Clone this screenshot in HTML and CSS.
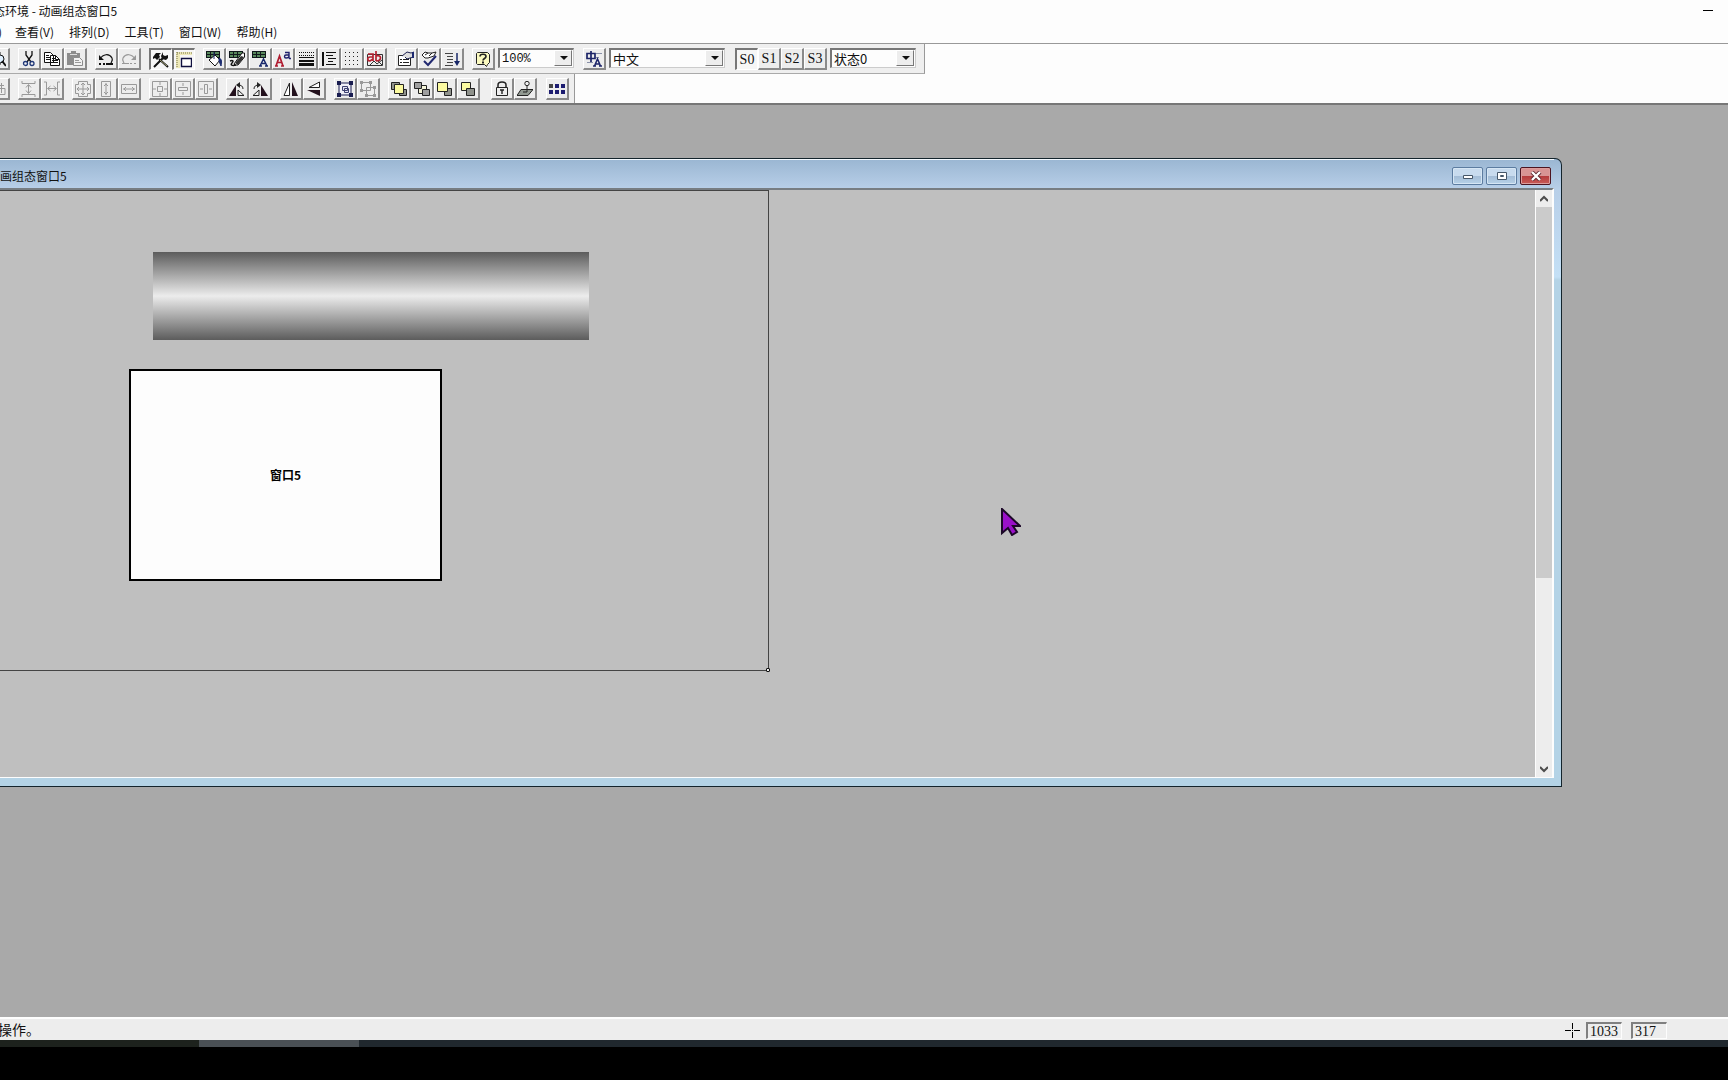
FILE: index.html
```html
<!DOCTYPE html>
<html lang="zh-CN">
<head>
<meta charset="utf-8">
<title>动画组态窗口5</title>
<link rel="stylesheet" href="styles.css">
</head>
<body>
<svg class="defs" aria-hidden="true">
  <symbol id="undo" viewBox="0 0 16 16"><path d="M2 8c3-5 9-6 12-1 1 2 0 3-1 5" fill="none" stroke="currentColor" stroke-width="1.2"/><path d="M1 4v5h5zM1 12h2v2H1zM5 12h2v2H5zM8 12h7v2H8z" fill="currentColor"/></symbol>
  <symbol id="redo" viewBox="0 0 16 16"><path d="M14 8C11 3 5 2 2 7c-1 2 0 3 1 5" fill="none" stroke="currentColor" stroke-width="1.2"/><path d="M15 4v5h-5zM1 12h7v1H1zM9 12h2v1H9zM13 12h2v1h-2z" fill="currentColor"/></symbol>
  <symbol id="table" viewBox="0 0 16 16"><path d="M0 0h14v7H0z" fill="#10181c"/><path d="M1 1h3v2H1zM5 1h3v2H5zM9 1h4v2H9zM1 4h3v2H1zM5 4h3v2H5zM9 4h4v2H9z" fill="#58885c"/></symbol>
  <symbol id="rotate" viewBox="0 0 16 16"><path d="M7 4v11H0z" fill="#22101c"/><path d="M9 14.500V9l6 5.500zM14 8c0-3-2-4-5-4" fill="none" stroke="#222"/><path d="M11 1v6L7 4z" fill="#222"/></symbol>
  <symbol id="mirror" viewBox="0 0 16 16"><path d="M6.500 2v12.500H1z" fill="#fff" stroke="#222"/><path d="M9 1l6 14H9z" fill="#22101c"/></symbol>
  <symbol id="frame" viewBox="0 0 16 16"><path d="M.5.5h15v15H.5z" fill="none" stroke="currentColor"/></symbol>
</svg>
<div class="app">
  <header class="titlebar">
    <h1 class="caption">态环境 - 动画组态窗口5</h1>
    <button class="minimize" aria-label="最小化"><svg viewBox="0 0 10 10"><path d="M0 4h10v1H0z"/></svg></button>
  </header>
  <nav class="menu">
    <button class="cut">)</button><button>查看(V)</button><button>排列(D)</button><button>工具(T)</button><button>窗口(W)</button><button>帮助(H)</button>
  </nav>
  <div class="toolbars">
    <div class="toolbar">
      <div class="group first">
        <button class="tool" aria-label="预览"><svg viewBox="0 0 16 16"><path d="M3 1h7v13H1z" fill="#fff" stroke="#222"/><circle cx="10" cy="8" r="4" fill="#dff0ff" stroke="#111"/><path d="M12 10l4 5" stroke="#111" stroke-width="2"/></svg></button>
      </div>
      <div class="group">
        <button class="tool" aria-label="剪切"><svg viewBox="0 0 16 16"><path d="M5 0v4l5 7M11 0v4l-5 7" fill="none" stroke="#111" stroke-width="1.300"/><circle cx="4.500" cy="12.500" r="2" fill="none" stroke="#203878" stroke-width="1.300"/><circle cx="11" cy="12.500" r="2" fill="none" stroke="#203878" stroke-width="1.300"/></svg></button>
        <button class="tool" aria-label="复制"><svg viewBox="0 0 16 16"><path d="M.5 1.500h6l3 3v7h-9zM6.500 4.500h5l4 4v6h-9z" fill="#fff" stroke="#111"/><path d="M2 4.500h3M2 6.500h4M2 8.500h4M8 7.500h3M8 9.500h6M8 11.500h6M11.500 4.500v4h4" fill="none" stroke="#111"/></svg></button>
        <button class="tool" aria-label="粘贴"><svg viewBox="0 0 16 16"><path d="M0 2h4V0h5v2h4v12H0z" fill="#8c8c8c"/><path d="M3 3.500h7" stroke="#ddd"/><path d="M6.500 6.500h6l3 3v5h-9z" fill="#f2f2f2" stroke="#8c8c8c"/><path d="M8 9.500h4M8 11.500h6" stroke="#999"/></svg></button>
      </div>
      <div class="group">
        <button class="tool" aria-label="撤消"><svg><use href="#undo"/></svg></button>
        <button class="tool dim" aria-label="重做"><svg><use href="#redo"/></svg></button>
      </div>
      <div class="group">
        <button class="tool on" aria-label="工具箱"><svg viewBox="0 0 16 16"><path d="M1 15L10 6M6 7l9 8" stroke="#111" stroke-width="2"/><path d="M0 5l3-4h5L6 3l1 2-3 3-2-2-2 1z" fill="#111"/><path d="M10 0v3l2 1 3-1v3l-2 2-4-1-1-3z" fill="#111"/><path d="M7 8l7 6" stroke="#a4a478"/></svg></button>
        <button class="tool on" aria-label="标尺"><svg viewBox="0 0 16 16"><path d="M0 0h16v3H4v13H0z" fill="#eee9b8"/><path d="M1 0v16M1 1h15" fill="none" stroke="#77734a" stroke-dasharray="1 1"/><path d="M5.500 6.500h10v8h-10z" fill="#fff" stroke="#101040" stroke-width="1.400"/></svg></button>
      </div>
      <div class="group">
        <button class="tool" aria-label="填充色"><svg viewBox="0 0 16 16"><use href="#table" width="16" height="16"/><path d="M9 4l5 5-5 6-6-6z" fill="#fff" stroke="#111"/><path d="M8 1v7M13 7c3 1 3 4 2 8l-2-5z" fill="#1c2c70" stroke="#1c2c70"/></svg></button>
        <button class="tool" aria-label="线色"><svg viewBox="0 0 16 16"><use href="#table" width="16" height="16"/><path d="M15.500 2v4L9 14H6l-1-1 8-11z" fill="#fff" stroke="#111"/><path d="M9 14l6-8-3-1-6 7z" fill="#333"/><path d="M1 10c3-1 4 0 2 2s0 3 4 2" fill="none" stroke="#111" stroke-width="1.500"/></svg></button>
        <button class="tool" aria-label="字符色"><svg viewBox="0 0 16 16"><use href="#table" width="16" height="16"/><path d="M8 15l3.500-7L15 15M9 12.500h5M7 15h3M13 15h3" fill="none" stroke="#18286c" stroke-width="1.500"/></svg></button>
        <button class="tool" aria-label="字体"><svg viewBox="0 0 16 16"><path d="M1 15L4.500 5 8 15M2 11.500h5M0 15h3M6 15h3" fill="none" stroke="#b01c30" stroke-width="1.700"/><path d="M10 1.500h4v6M14 4h-3c-2 0-2 3 0 3s3-1 3-2M14 7.500h2" fill="none" stroke="#20206c" stroke-width="1.400"/></svg></button>
        <button class="tool" aria-label="线型"><svg viewBox="0 0 16 16"><path d="M1 1.500h15M1 4.500h15" stroke="#111" stroke-dasharray="1 1"/><path d="M1 6.500h15" stroke="#111"/><path d="M1 10h15" stroke="#111" stroke-width="2"/><path d="M1 13.500h15" stroke="#111" stroke-width="3"/></svg></button>
        <button class="tool" aria-label="对齐"><svg viewBox="0 0 16 16"><path d="M2 1v14" stroke="#111" stroke-width="2"/><path d="M5 1.500h10M5 4.500h7M7 7.500h8M7 10.500h5M5 13.500h10" stroke="#111"/></svg></button>
        <button class="tool" aria-label="网格"><svg viewBox="0 0 16 16"><path d="M1 1.500h15M1 5.500h15M1 9.500h15M1 13.500h15" stroke="#222" stroke-dasharray="1 3"/></svg></button>
        <button class="tool" aria-label="标签"><svg viewBox="0 0 16 16"><path d="M.5 3.500h15v11H.5z" fill="#eee" stroke="#333"/><path d="M3 14l4-4 3 3 5-4M11 10l4 4" fill="none" stroke="#333"/><path d="M1 3h5v7M6 6H3c-3 0-3 4 0 4l3-2M9 0v10M9 5c6-2 6 5 0 5" fill="none" stroke="#b42030" stroke-width="1.700"/></svg></button>
      </div>
      <div class="group">
        <button class="tool" aria-label="属性"><svg viewBox="0 0 16 16"><path d="M.5 4.500h12v10H.5z" fill="#fff" stroke="#222"/><path d="M2 8.500h2M5 8.500h6M2 11.500h2M5 11.500h6" stroke="#222"/><path d="M4 5l5-4 4 1 3-1v5l-4 1-3 1-2-2" fill="#ddd" stroke="#1c2050"/><path d="M14 1h2v6h-2z" fill="#1c2870"/></svg></button>
        <button class="tool" aria-label="检查"><svg viewBox="0 0 16 16"><path d="M3 10l4 4 8-9" fill="none" stroke="#202870" stroke-width="2"/><path d="M1 4l3-3 3 1 4 0 4-1-2 4-6 2-3 0zM4 4l3-2M8 5l3-3" fill="#fff" stroke="#222"/></svg></button>
        <button class="tool" aria-label="排序"><svg viewBox="0 0 16 16"><path d="M1 2.500h8M3 5.500h6M3 8.500h6M3 11.500h6M1 14.500h8" stroke="#444"/><path d="M13 2v10" stroke="#182868" stroke-width="1.500"/><path d="M10 10h6l-3 5z" fill="#182868"/></svg></button>
      </div>
      <div class="group">
        <button class="tool" aria-label="帮助"><svg viewBox="0 0 16 16"><path d="M2.500 1.500h10l2 2v8l-2 2-1 2-2-2h-7l-1-1v-10z" fill="#fbfac0" stroke="#222"/><path d="M5 5.500c0-3 6-3 6 0 0 2-3 2-3 4" fill="none" stroke="#222" stroke-width="1.600"/><path d="M7 10.500h2v2H7z" fill="#222"/></svg></button>
        <span class="combo zoom"><select aria-label="缩放"><option>100%</option></select></span>
      </div>
      <div class="group lang">
        <button class="tool" aria-label="语言"><svg viewBox="0 0 16 16"><path d="M1 2.500h8v5H1zM5 0v11" fill="none" stroke="#1c2468" stroke-width="1.700"/><path d="M10 2.500h6M10 6.500h3M1 11.500h6" stroke="#8890a8"/><path d="M8.500 15l3-7 3 7M10 13h4M7 15h3M13 15h3" fill="none" stroke="#1c2468" stroke-width="1.500"/></svg></button>
        <span class="combo language"><select aria-label="语言选择"><option>中文</option></select></span>
      </div>
      <div class="group states">
        <button class="tool on">S0</button><button class="tool">S1</button><button class="tool">S2</button><button class="tool">S3</button>
        <span class="combo state"><select aria-label="状态"><option>状态0</option></select></span>
      </div>
    </div>
    <div class="toolbar">
      <div class="group first">
        <button class="tool dim" aria-label="下对齐"><svg viewBox="0 0 16 16"><path d="M2 4.500h12M11.500 2v10M8 7.500h7v6H4v-4" fill="none" stroke="currentColor"/></svg></button>
      </div>
      <div class="group dim">
        <button class="tool" aria-label="纵向等间距"><svg viewBox="0 0 16 16"><path d="M1 0v2.500h13V0M1 16v-2.500h13V16M7.500 4v8M5 6.500l2.500-3 2.500 3M5 9.500l2.500 3 2.500-3" fill="none" stroke="currentColor"/></svg></button>
        <button class="tool" aria-label="横向等间距"><svg viewBox="0 0 16 16"><path d="M0 1h2.500v13H0M16 1h-2.500v13H16M4 7.500h8M6.500 5l-3 2.500 3 2.500M9.500 5l3 2.500-3 2.500" fill="none" stroke="currentColor"/></svg></button>
      </div>
      <div class="group dim">
        <button class="tool" aria-label="等高宽"><svg viewBox="0 0 16 16"><path d="M3.500 3.500V.5h9v3h3v9h-3v3h-9v-3h-3v-9zM8 2v12M2 8h12M6 4l2-2 2 2M6 12l2 2 2-2M4 6L2 8l2 2M12 6l2 2-2 2" fill="none" stroke="currentColor"/></svg></button>
        <button class="tool" aria-label="等高"><svg viewBox="0 0 16 16"><path d="M3.500.5h9v15h-9zM8 2v12M6 5l2-2 2 2M6 11l2 2 2-2" fill="none" stroke="currentColor"/></svg></button>
        <button class="tool" aria-label="等宽"><svg viewBox="0 0 16 16"><path d="M.5 3.500h15v9H.5zM2 8h12M5 6L3 8l2 2M11 6l2 2-2 2" fill="none" stroke="currentColor"/></svg></button>
      </div>
      <div class="group dim">
        <button class="tool" aria-label="窗口对中"><svg viewBox="0 0 16 16"><use href="#frame"/><path d="M5.500 5.500h5v5h-5zM8 1v3M8 12v3M1 8h3M12 8h3" fill="none" stroke="currentColor"/></svg></button>
        <button class="tool" aria-label="纵向对中"><svg viewBox="0 0 16 16"><use href="#frame"/><path d="M3.500 6.500h9v3h-9zM8 2v3M8 11v3" fill="none" stroke="currentColor"/></svg></button>
        <button class="tool" aria-label="横向对中"><svg viewBox="0 0 16 16"><use href="#frame"/><path d="M6.500 3.500h3v9h-3zM2 8h3M11 8h3" fill="none" stroke="currentColor"/></svg></button>
      </div>
      <div class="group">
        <button class="tool" aria-label="左旋"><svg><use href="#rotate"/></svg></button>
        <button class="tool flip" aria-label="右旋"><svg><use href="#rotate"/></svg></button>
      </div>
      <div class="group">
        <button class="tool" aria-label="左右镜像"><svg><use href="#mirror"/></svg></button>
        <button class="tool" aria-label="上下镜像"><svg viewBox="0 0 16 16"><path d="M13.500 1v5.500H3z" fill="#fff" stroke="#222"/><path d="M1 9h13v6z" fill="#22101c"/></svg></button>
      </div>
      <div class="group">
        <button class="tool" aria-label="组合"><svg viewBox="0 0 16 16"><path d="M2 2h12v12H2z" fill="#f0f0f8" stroke="#181c50"/><path d="M5.500 5.500h5v4h-5zM7.500 7.500h4v4h-4z" fill="#e4e4f4" stroke="#3c4070"/><path d="M0 0h4v4H0zM12 0h4v4h-4zM0 12h4v4H0zM12 12h4v4h-4z" fill="#181c50"/></svg></button>
        <button class="tool dim" aria-label="分解"><svg viewBox="0 0 16 16"><path d="M1.500 1.500h9v8h-9zM6.500 6.500h8v8h-8z" fill="#eee" stroke="currentColor"/><path d="M0 0h3v3H0zM9 0h3v3H9zM0 8h3v3H0zM13 5h3v3h-3zM5 13h3v3H5zM13 13h3v3h-3z" fill="currentColor"/></svg></button>
      </div>
      <div class="group">
        <button class="tool" aria-label="置于最前"><svg viewBox="0 0 16 16"><path d="M.5 1.500h8v7h-8zM8.500 8.500h7v6h-7z" fill="#8f928c" stroke="#222"/><path d="M3.500 3.500h9v9h-9z" fill="#fbfaa0" stroke="#222"/></svg></button>
        <button class="tool" aria-label="置于最后"><svg viewBox="0 0 16 16"><path d="M4.500 4.500h8v8h-8z" fill="#f4f4d8" stroke="#222"/><path d="M.5 1.500h7v6h-7zM8.500 8.500h7v6h-7z" fill="#9f9f9f" stroke="#222"/></svg></button>
        <button class="tool" aria-label="前移一层"><svg viewBox="0 0 16 16"><path d="M7.500 7.500h7v7h-7z" fill="#8f928c" stroke="#222"/><path d="M.5 1.500h10v9H.5z" fill="#fbfaa0" stroke="#222"/></svg></button>
        <button class="tool" aria-label="后移一层"><svg viewBox="0 0 16 16"><path d="M1.500 1.500h9v8h-9z" fill="#fbfaa0" stroke="#222"/><path d="M6.500 7.500h8v7h-8z" fill="#8f928c" stroke="#222"/></svg></button>
      </div>
      <div class="group locks">
        <button class="tool" aria-label="锁定"><svg viewBox="0 0 16 16"><path d="M4 7V4c0-4 8-4 8 0v3" fill="none" stroke="#222" stroke-width="1.500"/><path d="M2.500 6.500h11v8h-11z" fill="#eee" stroke="#222"/><path d="M6 9h4M8 9v4" stroke="#222" stroke-width="1.400"/></svg></button>
        <button class="tool" aria-label="固化"><svg viewBox="0 0 16 16"><path d="M4 8.500h12l-5 6H0z" fill="#929a92" stroke="#222"/><circle cx="10" cy="2.500" r="2.200" fill="#eee" stroke="#222"/><path d="M10 5v6M6 11h4" stroke="#222"/></svg></button>
      </div>
      <div class="group">
        <button class="tool" aria-label="多重复制"><svg viewBox="0 0 16 16"><path d="M0 3h4v4H0z" fill="#444"/><path d="M6 3h4v4H6zM12 3h4v4h-4zM0 9h4v4H0zM6 9h4v4H6zM12 9h4v4h-4z" fill="#1c1c70"/></svg></button>
      </div>
    </div>
  </div>
  <main class="desktop">
    <section class="window">
      <header class="window-title">
        <h2>画组态窗口5</h2>
        <div class="window-buttons">
          <button aria-label="最小化"><svg viewBox="0 0 12 10"><path d="M1.500 4.500h9v3h-9z" fill="#fff" stroke="#455668"/></svg></button>
          <button aria-label="最大化"><svg viewBox="0 0 12 10"><path d="M1.500 1.500h9v7h-9z" fill="#fff" stroke="#455668"/><path d="M4.500 4.500h3v1h-3z" fill="none" stroke="#455668"/></svg></button>
          <button class="close" aria-label="关闭"><svg viewBox="0 0 12 10"><path d="M2 1l8 8M10 1L2 9" stroke="#5c2830" stroke-width="4"/><path d="M2 1l8 8M10 1L2 9" stroke="#fff" stroke-width="2.400"/></svg></button>
        </div>
      </header>
      <div class="client">
        <div class="canvas">
          <div class="page">
            <div class="pipe"></div>
            <div class="label">窗口5</div>
            <span class="handle"></span>
          </div>
        </div>
        <div class="scroll">
          <button aria-label="向上滚动"><svg viewBox="0 0 8 8"><path d="M0 6l4-4 4 4" fill="none" stroke="#4c4c4c" stroke-width="2"/></svg></button>
          <div class="track"><div class="thumb"></div></div>
          <button aria-label="向下滚动"><svg viewBox="0 0 8 8"><path d="M0 2l4 4 4-4" fill="none" stroke="#4c4c4c" stroke-width="2"/></svg></button>
        </div>
      </div>
    </section>
    <svg class="pointer" viewBox="0 0 20 28"><path d="M1 1v24l6-5 4 7 5-3-4-6h7z" fill="#9a10c8" stroke="#1c0828" stroke-width="2"/></svg>
  </main>
  <footer class="status">
    <span class="message">操作。</span>
    <svg class="cross" viewBox="0 0 15 15"><path d="M0 7h6v1H0zM9 7h6v1H9zM7 0h1v6H7zM7 9h1v6H7zM7 7h1v1H7z"/></svg>
    <output>1033</output><output>317</output>
  </footer>
  <div class="taskbar"><span class="task"></span><span class="tray"></span></div>
</div>
</body>
</html>
```
FILE: styles.css
```css
* { box-sizing: border-box; }
body {
  margin: 0;
  background: #000;
  color: #111;
  font: 12px/16px "Noto Sans CJK SC", sans-serif;
}
h1, h2 { margin: 0; font-size: 12px; font-weight: 400; }
button { margin: 0; padding: 0; border: 0; background: none; color: inherit; font: inherit; }
svg { display: block; }
.defs { position: absolute; width: 0; height: 0; }
.app {
  display: flex;
  flex-direction: column;
  height: 100vh;
  padding-bottom: 33px;
  overflow: hidden;
}

/* Title and menu */
.titlebar {
  display: flex;
  justify-content: space-between;
  align-items: center;
  height: 22px;
  padding-right: 14px;
  background: #fdfdfd;
}
.caption { margin-left: -7px; white-space: pre; }
.minimize svg { width: 12px; height: 10px; }
.menu {
  display: flex;
  gap: 15px;
  height: 22px;
  padding-bottom: 1px;
  background: #fdfdfd;
  border-bottom: 1px solid #999;
}
.menu .cut { margin: 0 -2px 0 -2px; }

/* Toolbars */
.toolbars { background: #fdfdfd; border-bottom: 2px solid #777; }
.toolbar {
  display: flex;
  gap: 8px;
  width: fit-content;
  height: 30px;
  padding: 4px 8px 3px 0;
  background: #efefef;
  border-right: 1px solid #999;
  border-bottom: 1px solid #aaa;
}
.toolbar + .toolbar { height: 29px; padding-right: 5px; border-bottom: 0; }
.group { display: flex; }
.group.first { margin-left: -13px; }
.lang { margin-left: 1px; }
.states { margin-left: 2px; font: 14px/18px "Liberation Serif", serif; }
.locks { margin: 0 1px 0 3px; }
.tool {
  display: flex;
  align-items: center;
  justify-content: center;
  width: 23px;
  height: 22px;
  background: #ededed;
  border: solid;
  border-width: 1px 2px 2px 1px;
  border-color: #fff #8a8a8a #8a8a8a #fff;
}
.tool.on {
  background: #f6f6f6;
  border-width: 2px 1px 1px 2px;
  border-color: #777 #fff #fff #777;
}
.tool svg { width: 16px; height: 16px; }
.dim { color: #999; }
.flip svg { transform: scaleX(-1); }
.combo { position: relative; height: 20px; margin-left: 3px; }
.combo::before {
  content: "";
  position: absolute;
  top: 2px;
  right: 2px;
  bottom: 2px;
  width: 16px;
  background: #ededed;
  border: 1px solid;
  border-color: #fff #777 #777 #fff;
  pointer-events: none;
}
.combo::after {
  content: "";
  position: absolute;
  top: 8px;
  right: 6px;
  border: solid transparent;
  border-width: 4px 4px 0;
  border-top-color: #111;
  pointer-events: none;
}
.combo select {
  appearance: none;
  display: block;
  width: 100%;
  height: 20px;
  padding: 0 2px;
  background: #fdfdfd;
  border: solid;
  border-width: 2px 1px 1px 2px;
  border-color: #777 #ccc #ccc #777;
  border-radius: 0;
  color: #111;
  font: 13px/16px "Noto Sans CJK SC", sans-serif;
}
.zoom { width: 76px; }
.zoom select { font: 12px/16px "Liberation Mono", monospace; }
.language { width: 116px; }
.state { width: 86px; }

/* Work area */
.desktop { position: relative; flex: 1; background: #a9a9a9; overflow: hidden; }
.window {
  position: absolute;
  top: 53px;
  right: 166px;
  bottom: 230px;
  left: 0;
  display: flex;
  flex-direction: column;
  padding: 0 7px 8px 0;
  background: linear-gradient(#9ab6d2, #b8cfe8 30px, #c4e0f6 118px, #b4d3e6 121px);
  border: 1px solid #14242c;
  border-left-width: 0;
  border-radius: 0 7px 0 0;
}
.window-title {
  display: flex;
  justify-content: space-between;
  align-items: center;
  height: 29px;
  padding: 4px 3px 0 0;
  border-top: 1px solid #f4faff;
}
.window-title h2 { padding-bottom: 1px; }
.window-buttons { display: flex; gap: 3px; padding-bottom: 1px; }
.window-buttons button {
  display: flex;
  align-items: center;
  justify-content: center;
  width: 31px;
  height: 18px;
  background: linear-gradient(#c8dbee 48%, #a3bcd6 50%, #b7d2e8);
  border: 1px solid #5c7ca0;
  border-radius: 2px;
  box-shadow: inset 0 0 0 1px #d6e6f4;
}
.window-buttons .close {
  background: linear-gradient(#d89494 48%, #b43a3c 50%, #c85c58);
  border-color: #4c1420;
  box-shadow: inset 0 0 0 1px #dc9c9c;
}
.window-buttons svg { width: 12px; height: 10px; }
.client {
  display: flex;
  flex: 1;
  min-height: 0;
  border: solid #fdfdfd;
  border-width: 2px 2px 1px 0;
  border-top-color: #777d82;
}
.canvas { flex: 1; background: #bfbfbf; }
.page {
  position: relative;
  width: 769px;
  height: 481px;
  border: 1px solid #444;
  border-left-width: 0;
}
.pipe {
  position: absolute;
  left: 153px;
  top: 61px;
  width: 436px;
  height: 88px;
  background: linear-gradient(#5c5c5c, #ececec 50%, #5c5c5c);
}
.label {
  position: absolute;
  left: 129px;
  top: 178px;
  display: flex;
  align-items: center;
  justify-content: center;
  width: 313px;
  height: 212px;
  background: #fdfdfd;
  border: 2px solid #000;
  color: #000;
  font-weight: 700;
}
.handle {
  position: absolute;
  right: -2px;
  bottom: -2px;
  width: 4px;
  height: 4px;
  background: #eee;
  border: 1px solid #111;
  border-radius: 1px;
}
.scroll {
  display: flex;
  flex-direction: column;
  width: 17px;
  background: #ededed;
  border-left: 1px solid #fdfdfd;
}
.scroll button {
  display: flex;
  align-items: center;
  justify-content: center;
  height: 17px;
}
.scroll svg { width: 8px; height: 8px; }
.track { flex: 1; }
.thumb { height: 67%; background: #cbcbcb; }
.pointer { position: absolute; left: 1001px; top: 403px; width: 20px; height: 28px; }

/* Status bar */
.status {
  display: flex;
  align-items: center;
  height: 23px;
  padding: 1px 61px 0 0;
  background: #ededed;
  border-top: 2px solid #fdfdfd;
  font-size: 14px;
}
.message { flex: 1; margin-left: -2px; padding-bottom: 2px; }
.cross { width: 15px; height: 15px; margin-right: 6px; }
.status output {
  width: 36px;
  height: 17px;
  padding-left: 2px;
  border: solid;
  border-width: 2px 1px 1px 2px;
  border-color: #808080 #fdfdfd #fdfdfd #808080;
  font: 14px/15px "Liberation Serif", serif;
}
.status output + output { margin-left: 9px; }
.taskbar { display: flex; height: 7px; background: #1d221d; }
.task { width: 160px; margin-left: 199px; background: #4a5055; }
.tray { flex: 1; background: #20282e; }
```
